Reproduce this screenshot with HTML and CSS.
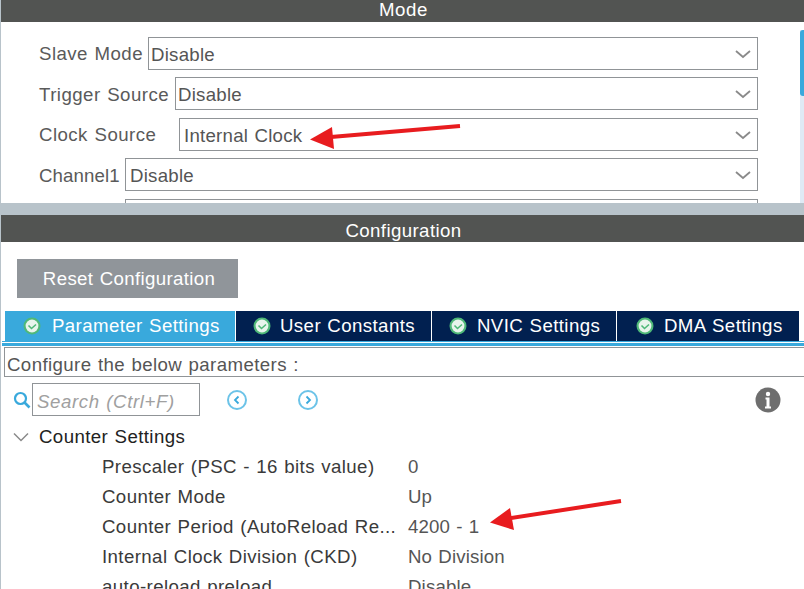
FILE: index.html
```html
<!DOCTYPE html>
<html lang="en">
<head>
<meta charset="utf-8">
<title>Timer configuration</title>
<link rel="stylesheet" href="styles.css">
</head>
<body>
<div class="page">
  <section class="mode">
    <header class="bar bar-mode">Mode</header>
    <div class="mode-body">
      <div class="mode-form">
        <div class="field"><span class="field-label w-slave">Slave Mode</span><div class="select">Disable<svg class="chev" viewBox="0 0 16 10"><path d="M1 2l7 6 7-6"/></svg></div></div>
        <div class="field"><span class="field-label w-trigger">Trigger Source</span><div class="select">Disable<svg class="chev" viewBox="0 0 16 10"><path d="M1 2l7 6 7-6"/></svg></div></div>
        <div class="field"><span class="field-label w-clock">Clock Source</span><div class="select select-clock">Internal Clock<svg class="chev" viewBox="0 0 16 10"><path d="M1 2l7 6 7-6"/></svg></div></div>
        <div class="field"><span class="field-label w-channel">Channel1</span><div class="select select-channel">Disable<svg class="chev" viewBox="0 0 16 10"><path d="M1 2l7 6 7-6"/></svg></div></div>
        <div class="field"><span class="field-label w-channel"></span><div class="select"></div></div>
      </div>
      <div class="scroll"><div class="thumb"></div></div>
    </div>
  </section>
  <div class="divider"></div>
  <section class="config">
    <header class="bar bar-config">Configuration</header>
    <div class="toolbar"><button class="reset">Reset Configuration</button></div>
    <nav class="tabs">
      <div class="tab tab-active tab-1"><svg class="ok" viewBox="0 0 18 18"><circle cx="9" cy="9" r="8.5" fill="#4fb878"/><circle cx="9" cy="9" r="6.4" fill="#e8f4ec"/><path d="M5.500 8.500l3 3 4.500-4" fill="none" stroke="#4fb878" stroke-width="1.600"/></svg>Parameter Settings</div>
      <div class="tab tab-2"><svg class="ok" viewBox="0 0 18 18"><circle cx="9" cy="9" r="8.5" fill="#4fb878"/><circle cx="9" cy="9" r="6.4" fill="#e8f4ec"/><path d="M5.500 8.500l3 3 4.500-4" fill="none" stroke="#4fb878" stroke-width="1.600"/></svg>User Constants</div>
      <div class="tab tab-3"><svg class="ok" viewBox="0 0 18 18"><circle cx="9" cy="9" r="8.5" fill="#4fb878"/><circle cx="9" cy="9" r="6.4" fill="#e8f4ec"/><path d="M5.500 8.500l3 3 4.500-4" fill="none" stroke="#4fb878" stroke-width="1.600"/></svg>NVIC Settings</div>
      <div class="tab tab-4"><svg class="ok" viewBox="0 0 18 18"><circle cx="9" cy="9" r="8.5" fill="#4fb878"/><circle cx="9" cy="9" r="6.4" fill="#e8f4ec"/><path d="M5.500 8.500l3 3 4.500-4" fill="none" stroke="#4fb878" stroke-width="1.600"/></svg>DMA Settings</div>
    </nav>
    <div class="tab-rule"></div>
    <div class="panel">
      <div class="hint">Configure the below parameters :</div>
      <div class="search-row">
        <svg class="lens" viewBox="0 0 18 18"><circle cx="7.500" cy="7.500" r="5.500" fill="none" stroke="#39a9dc" stroke-width="2.200"/><path d="M11.500 11.500l5 5" stroke="#39a9dc" stroke-width="2.600"/></svg>
        <div class="search">Search (Ctrl+F)</div>
        <svg class="nav nav-prev" viewBox="0 0 20 20"><circle cx="10" cy="10" r="9" fill="none" stroke="#6cc3e8" stroke-width="2"/><path d="M11.500 6.500L8 10l3.500 3.500" fill="none" stroke="#39a9dc" stroke-width="1.800"/></svg>
        <svg class="nav nav-next" viewBox="0 0 20 20"><circle cx="10" cy="10" r="9" fill="none" stroke="#6cc3e8" stroke-width="2"/><path d="M8.500 6.500L12 10l-3.500 3.500" fill="none" stroke="#39a9dc" stroke-width="1.800"/></svg>
        <svg class="info" viewBox="0 0 26 26"><circle cx="13" cy="13" r="12.500" fill="#6e6e6e"/><circle cx="13" cy="7" r="2.200" fill="#fff"/><path d="M10.500 10.500h4v9h1.500v2h-6v-2h1.500v-7h-1z" fill="#fff"/></svg>
      </div>
      <div class="tree-head"><svg class="tree-chev" viewBox="0 0 16 10"><path d="M1 1.500l7 7 7-7"/></svg>Counter Settings</div>
      <div class="param"><span class="param-name">Prescaler (PSC - 16 bits value)</span><span class="param-value">0</span></div>
      <div class="param"><span class="param-name">Counter Mode</span><span class="param-value">Up</span></div>
      <div class="param"><span class="param-name">Counter Period (AutoReload Re...</span><span class="param-value">4200 - 1</span></div>
      <div class="param"><span class="param-name">Internal Clock Division (CKD)</span><span class="param-value">No Division</span></div>
      <div class="param"><span class="param-name">auto-reload preload</span><span class="param-value">Disable</span></div>
    </div>
  </section>
  <svg class="arrows" viewBox="0 0 804 589">
    <path d="M325 137.500L460 126" stroke="#e81c1f" stroke-width="4" fill="none"/>
    <path d="M310 139.500L332 127L334 149z" fill="#e81c1f"/>
    <path d="M505 519L621 501" stroke="#e81c1f" stroke-width="4" fill="none"/>
    <path d="M490 522.500L510 508L514 530z" fill="#e81c1f"/>
  </svg>
</div>
</body>
</html>
```
FILE: styles.css
```css
* { box-sizing: border-box; }
html, body { margin: 0; padding: 0; }
body { width: 804px; height: 589px; overflow: hidden; background: #fff; font-family: "Liberation Sans", Arial, sans-serif; font-size: 18.67px; letter-spacing: .4px; word-spacing: .8px; }
.page { position: relative; width: 804px; height: 589px; overflow: hidden; border-left: 1px solid #b8c3ca; background: #fff; }
.bar { background: #525452; color: #fff; text-align: center; padding-left: 2px; }
.bar-mode { height: 22px; line-height: 20px; letter-spacing: .6px; }
.mode { height: 203px; overflow: hidden; }
.mode-body { display: flex; height: 181px; }
.mode-form { flex: none; width: 757px; padding: 14.9px 0 0 38px; display: flex; flex-direction: column; gap: 7.5px; }
.field { display: flex; align-items: center; flex: none; height: 33px; color: #5a5a5a; }
.field-label { flex: none; padding-top: 2px; letter-spacing: .45px; word-spacing: 1px; }
.w-slave { width: 109px; }
.w-trigger { width: 136px; }
.w-clock { width: 140px; }
.w-channel { width: 86px; letter-spacing: .1px; }
.select { flex: 1; height: 33px; border: 1px solid #909497; padding-left: 2px; line-height: 33px; position: relative; color: #555; letter-spacing: .25px; }
.select-clock { padding-left: 4px; }
.select-channel { padding-left: 4px; }
.chev { position: absolute; right: 6px; top: 11px; width: 16px; height: 10px; fill: none; stroke: #8a8a8a; stroke-width: 1.8; }
.scroll { margin: 8px 0 0 42px; flex: none; width: 4px; background: #dfeaf5; }
.thumb { height: 66px; background: #39a9dc; border-radius: 3px 0 0 3px; }
.divider { height: 12px; margin-left: -1px; background: #b8c3ca; }
.bar-config { height: 27px; line-height: 31px; }
.toolbar { height: 69px; padding: 17px 0 0 16px; }
.reset { display: block; width: 221px; height: 39px; border: 0; padding: 1px 0 0 3px; background: #90959a; color: #fff; font: inherit; letter-spacing: .35px; word-spacing: inherit; }
.tabs { display: flex; height: 30px; padding-left: 4px; }
.tab { display: flex; align-items: center; height: 30px; color: #fff; background: #012050; border-left: 1px solid #fff; }
.tab-active { background: #39a9dc; border-left: 0; }
.tab-1 { width: 230px; padding-left: 18px; }
.tab-2 { width: 196px; padding-left: 17px; }
.tab-3 { width: 185px; padding-left: 17px; }
.tab-4 { width: 183px; padding-left: 19px; }
.ok { flex: none; width: 18px; height: 18px; margin-right: 10px; }
.tab-1 .ok { margin-right: 11px; }
.tab-2 .ok { margin-right: 9px; }
.tab-rule { height: 5px; margin-left: 1px; border-top: 1px solid #39a9dc; border-bottom: 3px solid #39a9dc; }
.hint { height: 30px; margin: 1px 0 0 3px; border: 1px solid #909497; border-right: 0; padding-left: 2px; line-height: 33px; color: #555; }
.panel { position: relative; }
.search-row { display: flex; align-items: center; height: 33px; margin-top: 6px; padding-left: 12px; }
.lens { flex: none; width: 18px; height: 18px; margin-right: 1px; }
.search { flex: none; width: 168px; height: 33px; border: 1px solid #909497; padding-left: 4px; line-height: 35px; font-style: italic; color: #a0a0a0; letter-spacing: .6px; }
.nav { flex: none; width: 20px; height: 20px; }
.nav-prev { margin-left: 27px; }
.nav-next { margin-left: 51px; }
.info { flex: none; width: 26px; height: 26px; margin-left: 437px; }
.tree-head { display: flex; align-items: center; height: 30px; margin-top: 6px; padding-left: 12px; color: #222; }
.tree-chev { flex: none; width: 16px; height: 10px; margin-right: 10px; fill: none; stroke: #8a8a8a; stroke-width: 1.5; }
.param { display: flex; height: 30px; line-height: 30px; padding-left: 101px; color: #3a3a3a; }
.param-name { flex: none; width: 306px; white-space: nowrap; }
.param-value { color: #555; letter-spacing: .15px; }
.arrows { position: absolute; left: -1px; top: 0; width: 804px; height: 589px; pointer-events: none; }
```
